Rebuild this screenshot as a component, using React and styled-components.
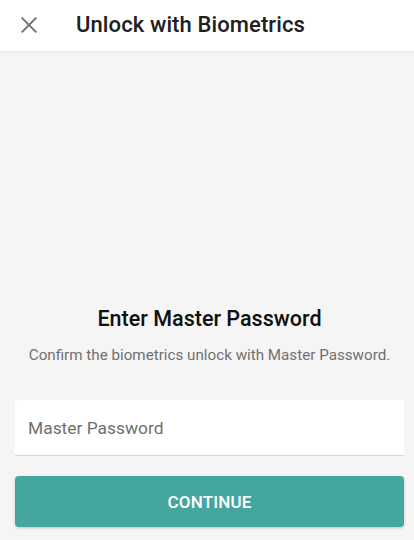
import styled, { createGlobalStyle } from 'styled-components';

const GlobalStyle = createGlobalStyle`
    html, body {
        margin: 0;
        padding: 0;
        background: #f5f5f5;
    }
    * {
        box-sizing: border-box;
    }
`;

const Page = styled.div`
    display: flex;
    flex-direction: column;
    height: 100vh;
    font-family: Roboto, 'Noto Sans', sans-serif;
    background: #f5f5f5;
`;

const Header = styled.header`
    display: flex;
    align-items: center;
    height: 52px;
    padding: 0 0 0 16px;
    background: #ffffff;
    border-bottom: 1px solid #ececec;
    box-shadow: 0 1px 2px rgba(0, 0, 0, 0.04);
`;

const CloseButton = styled.button`
    display: flex;
    align-items: center;
    justify-content: center;
    width: 26px;
    height: 26px;
    padding: 0;
    margin: -2px 34px 0 0;
    border: none;
    background: none;
    color: #707070;
    cursor: pointer;
`;

const HeaderTitle = styled.h1`
    margin: 0 0 2px;
    font-family: 'Roboto Medium', Roboto, sans-serif;
    font-size: 22px;
    font-weight: 500;
    color: #202020;
    letter-spacing: 0.1px;
`;

const Content = styled.main`
    flex: 1;
    display: flex;
    flex-direction: column;
    justify-content: flex-end;
    padding: 0 10px 13px 15px;
`;

const Title = styled.h2`
    margin: 0;
    text-align: center;
    font-family: 'Roboto Medium', Roboto, sans-serif;
    font-size: 21.5px;
    line-height: 28px;
    font-weight: 500;
    color: #111111;
`;

const Subtitle = styled.p`
    margin: 12px 0 35px;
    text-align: center;
    font-size: 15.2px;
    line-height: 20px;
    color: #707070;
`;

const Input = styled.input`
    height: 56px;
    padding: 0 13px;
    border: none;
    border-bottom: 1px solid #d6d6d6;
    border-radius: 3px 3px 0 0;
    background: #ffffff;
    font-family: inherit;
    font-size: 17.4px;
    color: #222;
    outline: none;

    &::placeholder {
        color: #6f6f6f;
    }
`;

const Button = styled.button`
    height: 51px;
    margin-top: 20px;
    border: none;
    border-radius: 4px;
    background: #45a6a0;
    color: #ffffff;
    font-family: 'Roboto Medium', Roboto, sans-serif;
    font-size: 17px;
    font-weight: 500;
    letter-spacing: 0.2px;
    box-shadow: 0 1px 3px rgba(0, 0, 0, 0.2);
    cursor: pointer;
`;

const CloseIcon = () => (
    <svg width='18' height='18' viewBox='0 0 16 16' fill='none'>
        <path
            d='M1.5 1.5 L14.5 14.5 M14.5 1.5 L1.5 14.5'
            stroke='currentColor'
            strokeWidth='1.7'
        />
    </svg>
);

const App = () => {
    return (
        <>
            <GlobalStyle />
            <Page>
                <Header>
                    <CloseButton aria-label='Close'>
                        <CloseIcon />
                    </CloseButton>
                    <HeaderTitle>Unlock with Biometrics</HeaderTitle>
                </Header>
                <Content>
                    <Title>Enter Master Password</Title>
                    <Subtitle>Confirm the biometrics unlock with Master Password.</Subtitle>
                    <Input type='password' placeholder='Master Password' />
                    <Button type='button'>CONTINUE</Button>
                </Content>
            </Page>
        </>
    );
};

export default App;
